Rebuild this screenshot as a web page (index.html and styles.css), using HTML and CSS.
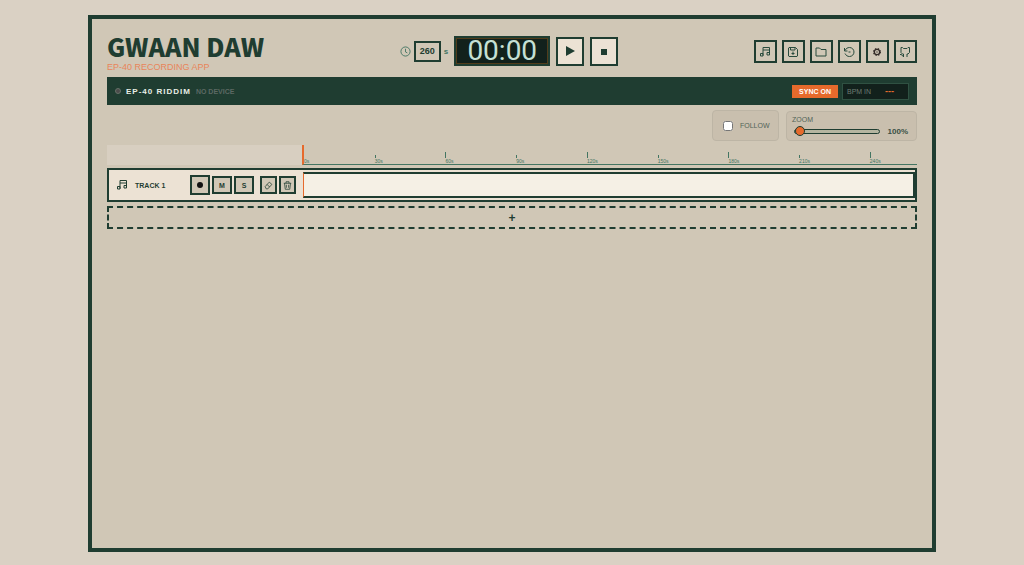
FILE: index.html
```html
<!DOCTYPE html>
<html lang="en">
<head>
  <meta charset="UTF-8" />
  <title>Gwaan DAW</title>
  <meta name="viewport" content="width=device-width, initial-scale=1" />
  <link rel="stylesheet" href="styles.css">
</head>
<body>

<!-- Shared icons -->
<svg class="hidden" aria-hidden="true">
  <symbol id="icon-music" viewBox="0 0 24 24">
    <path d="M8 19V3h13v14M8 8h13" />
    <path d="M3 15h5v5H3zM16 13h5v5h-5z" />
  </symbol>
</svg>

<div class="app">
  <header>
    <div class="brand">
      <h1>GWAAN DAW</h1>
      <p>EP-40 RECORDING APP</p>
    </div>

    <div class="transport">
      <label class="duration">
        <svg class="clock" viewBox="0 0 24 24"><circle cx="12" cy="12" r="10" /><path d="M12 6v7l4 2" /></svg>
        <input type="text" value="260" aria-label="Duration in seconds" />
        <span>s</span>
      </label>
      <div class="display"><span>00:00</span></div>
      <button class="play" aria-label="Play"><svg viewBox="0 0 10 10"><path d="M1 0l9 5-9 5z" /></svg></button>
      <button class="stop" aria-label="Stop"><svg viewBox="0 0 10 10"><path d="M2 3h6v6H2z" /></svg></button>
    </div>

    <nav>
      <button aria-label="Music"><svg><use href="#icon-music" /></svg></button>
      <button aria-label="Save"><svg viewBox="0 0 24 24"><path d="M4 3h13l4 4v13l-1 1H4l-1-1V4zM7 3v5h9V3M12 11v7M9 15h6" /></svg></button>
      <button aria-label="Open"><svg viewBox="0 0 24 24"><path d="M2 4h7l3 3h10v13H2z" /></svg></button>
      <button aria-label="History"><svg viewBox="0 0 24 24"><path d="M3 4v6h6M4 9c2-4 5-6 9-6 5 0 9 4 9 9s-4 9-9 9c-4 0-7-2-9-6M11 12h4" /></svg></button>
      <button class="gear" aria-label="Settings"><svg viewBox="0 0 24 24"><circle cx="12" cy="12" r="8" /><circle class="hub" cx="12" cy="12" r="2" /><circle class="teeth" cx="12" cy="12" r="10" /></svg></button>
      <a href="#" aria-label="GitHub"><svg viewBox="0 0 24 24"><path d="M9 22v-6H7l-3-3V3h3l2 2h7l2-2h3v10l-3 3h-2v6M2 17h3l2 3h2" /></svg></a>
    </nav>
  </header>

  <!-- Device status -->
  <section class="device">
    <span class="led"></span>
    <strong>EP-40 RIDDIM</strong>
    <span class="status">NO DEVICE</span>
    <button class="sync">SYNC ON</button>
    <div class="bpm"><span>BPM IN</span><b>---</b></div>
  </section>

  <!-- View options -->
  <div class="view">
    <label class="follow"><input type="checkbox" /> FOLLOW</label>
    <div class="zoom">
      <label for="zoom">ZOOM</label>
      <div class="zoom-row">
        <input type="range" id="zoom" min="100" max="1000" value="100" />
        <output for="zoom">100%</output>
      </div>
    </div>
  </div>

  <div class="timeline">
    <div class="corner"></div>
    <div class="ruler">
      <span>0s</span>
      <span>30s</span>
      <span class="major">60s</span>
      <span>90s</span>
      <span class="major">120s</span>
      <span>150s</span>
      <span class="major">180s</span>
      <span>210s</span>
      <span class="major">240s</span>
    </div>
  </div>

  <div class="track">
    <div class="track-head">
      <svg class="track-icon"><use href="#icon-music" /></svg>
      <span class="name">TRACK 1</span>
      <button class="record" aria-label="Record"><svg viewBox="0 0 6 6"><circle cx="3" cy="3" r="3" /></svg></button>
      <button>M</button>
      <button>S</button>
      <button class="tool erase" aria-label="Erase"><svg viewBox="0 0 24 24"><path d="M3 15L14 3l7 6-11 12H6zM8 9l7 7" /></svg></button>
      <button class="tool" aria-label="Delete"><svg viewBox="0 0 24 24"><path d="M2 6h20M8 6V2h8v4M4 6l2 16h12l2-16M9 10v8M15 10v8" /></svg></button>
    </div>
    <div class="lane"></div>
  </div>

  <button class="add" aria-label="Add track">+</button>
</div>

</body>
</html>
```
FILE: styles.css
```css
:root {
  --green: #1f3d31;
  --mid: #437562;
  --orange: #e66a2c;
  --panel: #d0c7b6;
  --cream: #ece2d4;
}
* {
  box-sizing: border-box;
  font-family: "Liberation Sans", Arial, sans-serif;
}
body {
  margin: 0;
  min-height: 100vh;
  padding: 15px 88px 13px;
  display: flex;
  background: #dad1c4;
  color: var(--green);
}
.hidden {
  display: none;
}
svg {
  display: block;
  fill: none;
  stroke: currentColor;
  stroke-width: 2;
}
button, input {
  margin: 0;
  padding: 0;
  color: var(--green);
}
button {
  display: grid;
  place-items: center;
  border: 2px solid var(--green);
  background: var(--cream);
  cursor: pointer;
}
.app {
  flex: 1;
  border: 4px solid var(--green);
  background: var(--panel);
  padding: 14px 15px;
}

/* Header */
header {
  display: flex;
  align-items: flex-start;
  justify-content: space-between;
  height: 44px;
}
h1 {
  margin: 0;
  font-family: "Noto Sans CJK SC", sans-serif;
  font-size: 25px;
  font-weight: 900;
  line-height: 26px;
  white-space: nowrap;
}
.brand p {
  margin: 3px 0 0;
  font-size: 9px;
  line-height: 10px;
  color: #e8855a;
}
.transport {
  display: flex;
  align-items: center;
  gap: 6px;
  padding-top: 3px;
}
.duration {
  display: flex;
  align-items: center;
  gap: 3px;
  font-size: 8px;
  font-weight: bold;
  color: var(--mid);
}
.duration input {
  width: 27px;
  height: 21px;
  border: 2px solid var(--green);
  background: var(--panel);
  font-size: 9px;
  font-weight: bold;
  text-align: center;
}
.clock {
  width: 11px;
  height: 11px;
}
.display {
  display: grid;
  place-items: center;
  width: 96px;
  height: 30px;
  border: 2px solid var(--green);
  outline: 1px solid #523d1b;
  outline-offset: -3px;
  background: #12211c;
  color: #c5e0d5;
}
.display span {
  font-family: Roboto, sans-serif;
  font-size: 28px;
  line-height: 26px;
}
.play, .stop {
  width: 28px;
  height: 29px;
}
.play svg, .stop svg {
  width: 10px;
  height: 10px;
  fill: var(--green);
  stroke: none;
}
nav {
  display: flex;
  gap: 5px;
  padding-top: 7px;
}
nav button, nav a {
  display: grid;
  place-items: center;
  width: 23px;
  height: 23px;
  border: 2px solid var(--green);
  background: var(--panel);
  color: #294b3d;
}
nav svg {
  width: 12px;
  height: 12px;
}
nav .gear {
  color: #342c28;
}
.gear svg {
  stroke-width: 4;
  width: 8px;
  height: 8px;
}
.hub {
  fill: currentColor;
  stroke: none;
}
.teeth {
  stroke-dasharray: 4 4;
}

/* Device bar */
.device {
  display: flex;
  align-items: center;
  height: 28px;
  padding: 0 8px;
  background: var(--green);
}
.led {
  width: 6px;
  height: 6px;
  border: 1px solid #667068;
  border-radius: 50%;
  background: #4b4b4b;
}
.device strong {
  margin: 0 5px;
  color: #e8eee5;
  font-size: 8px;
  letter-spacing: 1px;
}
.status {
  color: #5c6963;
  font-size: 7px;
  font-weight: bold;
}
.sync {
  margin-left: auto;
  width: 46px;
  height: 13px;
  border: 0;
  background: var(--orange);
  color: #fff;
  font-size: 7px;
  font-weight: bold;
}
.bpm {
  display: flex;
  align-items: center;
  justify-content: space-between;
  width: 67px;
  height: 17px;
  margin-left: 4px;
  padding: 0 14px 0 4px;
  border: 1px solid #2f5142;
  background: #12211c;
  color: #6d7c73;
  font-size: 7px;
}
.bpm b {
  color: var(--orange);
  font-size: 9px;
}

/* View options */
.view {
  display: flex;
  justify-content: flex-end;
  align-items: flex-end;
  gap: 7px;
  height: 36px;
  margin-bottom: 4px;
}
.follow, .zoom {
  border: 1px solid #bdb5a5;
  border-radius: 4px;
  background: #c9bfae;
  color: #526458;
  font-size: 7px;
}
.follow {
  display: flex;
  align-items: center;
  gap: 7px;
  width: 67px;
  height: 31px;
  padding-left: 10px;
}
.follow input {
  width: 10px;
  height: 10px;
}
.zoom {
  width: 131px;
  height: 30px;
  padding: 3px 8px 3px 5px;
}
.zoom label {
  display: block;
  line-height: 9px;
}
.zoom-row {
  display: flex;
  align-items: center;
  justify-content: space-between;
  padding-left: 2px;
  height: 14px;
}
.zoom-row input {
  appearance: none;
  width: 86px;
  height: 5px;
  border: 1px solid var(--green);
  border-radius: 3px;
  background: #b5b5a0;
}
.zoom-row input::-webkit-slider-thumb {
  appearance: none;
  width: 10px;
  height: 10px;
  border: 1px solid var(--green);
  border-radius: 50%;
  background: var(--orange);
}
.zoom-row output {
  color: #3a5044;
  font-size: 8px;
  font-weight: bold;
}

/* Timeline */
.timeline {
  display: flex;
  height: 20px;
}
.corner {
  width: 195px;
  background: #d8cfc1;
}
.ruler {
  flex: 1;
  display: grid;
  grid-template-columns: repeat(8, 30fr) 20fr;
  align-items: end;
  border-bottom: 1px solid var(--mid);
  border-left: 2px solid var(--orange);
}
.ruler span {
  font-size: 5px;
  line-height: 6px;
  color: var(--mid);
}
.ruler span::before {
  content: "";
  display: block;
  width: 1px;
  height: 3px;
  background: var(--mid);
}
.ruler .major::before {
  height: 6px;
}
.ruler span:first-child::before {
  background: none;
}
.track {
  display: flex;
  height: 34px;
  margin-top: 3px;
  border: 2px solid var(--green);
  background: var(--cream);
}
.track-head {
  display: flex;
  align-items: center;
  width: 194px;
  gap: 2px;
  padding: 0 7px;
}
.track-icon {
  width: 12px;
  height: 12px;
}
.name {
  margin: 0 auto 0 5px;
  font-size: 7px;
  font-weight: bold;
}
.track-head button {
  width: 20px;
  height: 18px;
  background: var(--panel);
  font-size: 7px;
  font-weight: bold;
}
.track-head .record {
  height: 20px;
}
.record svg {
  width: 6px;
  height: 6px;
  fill: #111;
  stroke: none;
}
.track-head .tool {
  width: 17px;
}
.track-head .erase {
  margin-left: 4px;
}
.tool svg {
  width: 9px;
  height: 9px;
}
.lane {
  flex: 1;
  margin: 2px 0;
  border: 2px solid var(--green);
  border-left: 1px solid var(--orange);
  background: #f5f0e5;
}
.add {
  width: 100%;
  height: 23px;
  margin-top: 4px;
  border-style: dashed;
  background: none;
  font-size: 12px;
  font-weight: bold;
}
```
